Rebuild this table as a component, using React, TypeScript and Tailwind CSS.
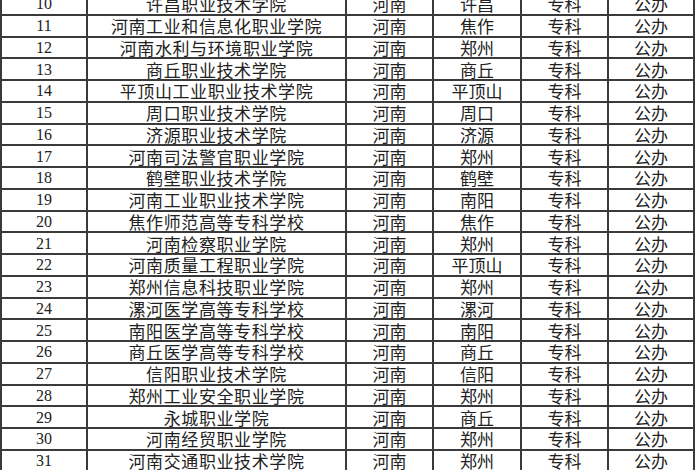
import React from "react";

const rows: [string, string, string][] = [
  ["10", "许昌职业技术学院", "许昌"],
  ["11", "河南工业和信息化职业学院", "焦作"],
  ["12", "河南水利与环境职业学院", "郑州"],
  ["13", "商丘职业技术学院", "商丘"],
  ["14", "平顶山工业职业技术学院", "平顶山"],
  ["15", "周口职业技术学院", "周口"],
  ["16", "济源职业技术学院", "济源"],
  ["17", "河南司法警官职业学院", "郑州"],
  ["18", "鹤壁职业技术学院", "鹤壁"],
  ["19", "河南工业职业技术学院", "南阳"],
  ["20", "焦作师范高等专科学校", "焦作"],
  ["21", "河南检察职业学院", "郑州"],
  ["22", "河南质量工程职业学院", "平顶山"],
  ["23", "郑州信息科技职业学院", "郑州"],
  ["24", "漯河医学高等专科学校", "漯河"],
  ["25", "南阳医学高等专科学校", "南阳"],
  ["26", "商丘医学高等专科学校", "商丘"],
  ["27", "信阳职业技术学院", "信阳"],
  ["28", "郑州工业安全职业学院", "郑州"],
  ["29", "永城职业学院", "商丘"],
  ["30", "河南经贸职业学院", "郑州"],
  ["31", "河南交通职业技术学院", "郑州"],
];

const cell =
  "border-r-2 border-b-2 border-[#3a3a3a] flex items-center justify-center leading-[17px]";
const cjk = "font-['Noto_Sans_CJK_SC',sans-serif] text-[17px]";

export default function App() {
  return (
    <div className="w-[700px] h-[470px] overflow-hidden bg-white">
      <div className="mt-[-6px] w-[695px] border-l-2 border-[#3a3a3a] text-[#222]">
        {rows.map(([n, name, city]) => (
          <div
            key={n}
            className="grid grid-cols-[86px_259px_87px_88px_87px_86px] h-[21.75px]"
          >
            <div className={`${cell} font-['Liberation_Serif',serif] text-[16px]`}>{n}</div>
            <div className={`${cell} ${cjk} tracking-[0.6px]`}>{name}</div>
            <div className={`${cell} ${cjk}`}>河南</div>
            <div className={`${cell} ${cjk}`}>{city}</div>
            <div className={`${cell} ${cjk}`}>专科</div>
            <div className={`${cell} ${cjk}`}>公办</div>
          </div>
        ))}
      </div>
    </div>
  );
}
